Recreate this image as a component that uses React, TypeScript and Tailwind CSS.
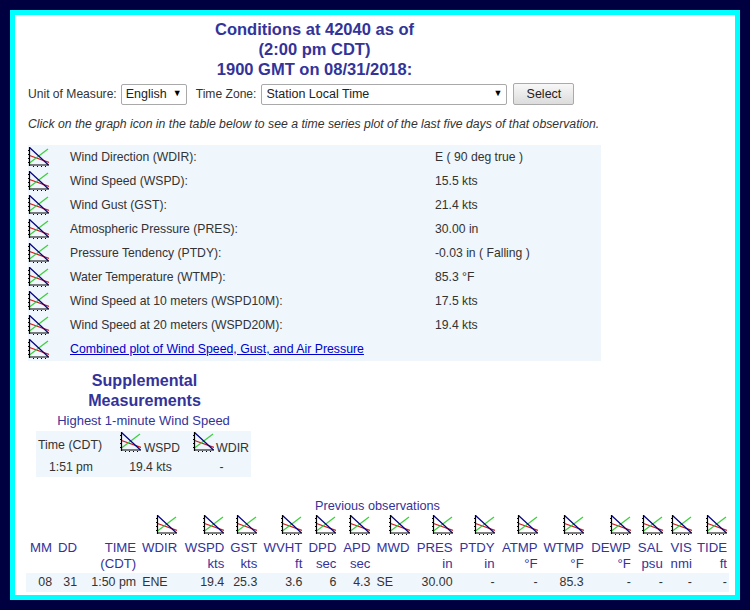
const fields = [
  ['Wind Direction (WDIR):', 'E ( 90 deg true )'],
  ['Wind Speed (WSPD):', '15.5 kts'],
  ['Wind Gust (GST):', '21.4 kts'],
  ['Atmospheric Pressure (PRES):', '30.00 in'],
  ['Pressure Tendency (PTDY):', '-0.03 in ( Falling )'],
  ['Water Temperature (WTMP):', '85.3 °F'],
  ['Wind Speed at 10 meters (WSPD10M):', '17.5 kts'],
  ['Wind Speed at 20 meters (WSPD20M):', '19.4 kts'],
];

const columns = [
  {name: 'MM', unit: '', value: '08', width: 'w-[28px]'},
  {name: 'DD', unit: '', value: '31', width: 'w-[25px]'},
  {name: 'TIME', unit: '(CDT)', value: '1:50 pm', width: 'w-[59px]'},
  {name: 'WDIR', unit: '', value: 'ENE', width: 'w-[41px]', icon: true, left: true},
  {name: 'WSPD', unit: 'kts', value: '19.4', width: 'w-[47px]', icon: true},
  {name: 'GST', unit: 'kts', value: '25.3', width: 'w-[33px]', icon: true},
  {name: 'WVHT', unit: 'ft', value: '3.6', width: 'w-[45px]', icon: true},
  {name: 'DPD', unit: 'sec', value: '6', width: 'w-[34px]', icon: true},
  {name: 'APD', unit: 'sec', value: '4.3', width: 'w-[34px]', icon: true},
  {name: 'MWD', unit: '', value: 'SE', width: 'w-[39px]', icon: true, left: true},
  {name: 'PRES', unit: 'in', value: '30.00', width: 'w-[43px]', icon: true},
  {name: 'PTDY', unit: 'in', value: '-', width: 'w-[42px]', icon: true},
  {name: 'ATMP', unit: '°F', value: '-', width: 'w-[43px]', icon: true},
  {name: 'WTMP', unit: '°F', value: '85.3', width: 'w-[46px]', icon: true},
  {name: 'DEWP', unit: '°F', value: '-', width: 'w-[47px]', icon: true},
  {name: 'SAL', unit: 'psu', value: '-', width: 'w-[32px]', icon: true},
  {name: 'VIS', unit: 'nmi', value: '-', width: 'w-[29px]', icon: true},
  {name: 'TIDE', unit: 'ft', value: '-', width: 'w-[35px]', icon: true},
];

function GraphIcon() {
  const ticks = [3, 7, 11, 15];
  return (
    <svg width="21" height="20" viewBox="0 0 21 20" className="inline-block align-top">
      <line x1="1.5" y1="8.5" x2="21" y2="15.5" stroke="#c81e1e" strokeWidth="1.3" />
      <line x1="1.5" y1="16" x2="20" y2="2" stroke="#3ccf3c" strokeWidth="1.2" />
      <line x1="1.5" y1="0.5" x2="20.5" y2="18" stroke="#000080" strokeWidth="1.2" />
      <path d="M1.5 0V19M1 18H21" stroke="#000" strokeWidth="1.2" fill="none" />
      {ticks.map(t => (
        <rect key={t} x="0" y={t} width="1" height="1" fill="#000" />
      ))}
      {ticks.map(t => (
        <rect key={t} x={t + 2} y="19" width="1" height="1" fill="#000" />
      ))}
    </svg>
  );
}

function SelectBox({value, className}: {value: string; className: string}) {
  return (
    <div className={`relative h-[21px] ${className}`}>
      <select
        defaultValue={value}
        className="h-full w-full appearance-none rounded-[2px] border border-[#a9a9a9] bg-white pl-[4px] text-[12.5px] text-[#222]"
      >
        <option>{value}</option>
      </select>
      <span className="pointer-events-none absolute top-[3px] right-[5px] text-[9px] text-black">▼</span>
    </div>
  );
}

export default function App() {
  return (
    <div className="box-border h-[610px] w-[750px] overflow-hidden bg-[#000040] p-[10px] font-['Liberation_Sans',Arial,sans-serif] text-[12.2px] text-[#333]">
      <div className="box-border h-full border-[5px] border-[#00ffff] bg-white pt-[4px] pl-[13px]">
        <h1 className="w-[573px] text-center text-[16.5px] leading-[20px] font-bold text-[#333399]">
          Conditions at 42040 as of
          <br />
          (2:00 pm CDT)
          <br />
          1900 GMT on 08/31/2018:
        </h1>

        <form className="mt-[4px] flex h-[22px] items-center">
          <span className="text-[12.1px]">Unit of Measure:</span>
          <SelectBox value="English" className="ml-[4px] w-[66px]" />
          <span className="ml-[9px] text-[12.1px]">Time Zone:</span>
          <SelectBox value="Station Local Time" className="ml-[5px] w-[246px]" />
          <button
            type="button"
            className="ml-[6px] h-[22px] w-[61px] rounded-[2px] border border-[#aaa] bg-gradient-to-b from-[#f8f8f8] to-[#dcdcdc] text-[12.5px] text-[#222]"
          >
            Select
          </button>
        </form>

        <p className="mt-[12px] h-[14px] text-[12.24px] leading-[14px] whitespace-nowrap italic">
          Click on the graph icon in the table below to see a time series plot of the last five days of that
          observation.
        </p>

        <table className="mt-[14px] w-[573px] table-fixed bg-[#eff6fc]">
          <tbody>
            {fields.map(([label, value]) => (
              <tr key={label} className="h-[24px]">
                <td className="w-[42px] align-top pt-[2px]">
                  <GraphIcon />
                </td>
                <td className="w-[365px]">{label}</td>
                <td>{value}</td>
              </tr>
            ))}
            <tr className="h-[24px]">
              <td className="align-top pt-[2px]">
                <GraphIcon />
              </td>
              <td colSpan={2}>
                <a href="#" className="text-[12.3px] text-[#0000cc] underline">
                  Combined plot of Wind Speed, Gust, and Air Pressure
                </a>
              </td>
            </tr>
          </tbody>
        </table>

        <div className="mt-[9px] ml-[8px] w-[215px] text-center">
          <h2 className="pl-[2px] text-[16.1px] leading-[20px] font-bold text-[#333399]">
            Supplemental
            <br />
            Measurements
          </h2>
          <div className="mt-[4px] h-[14px] text-[13px] leading-[14px] whitespace-nowrap text-[#333399]">
            Highest 1-minute Wind Speed
          </div>
          <table className="mt-[3px] w-[215px] table-fixed bg-[#eff6fc]">
            <tbody>
              <tr className="h-[26px]">
                <td className="w-[84px] pt-[2px] pr-[16px] text-[12.4px] whitespace-nowrap">Time (CDT)</td>
                <td className="w-[73px] text-left align-top pt-[1px]">
                  <GraphIcon />
                  <span className="ml-[3px] inline-block pt-[7px] text-[12px]">WSPD</span>
                </td>
                <td className="text-left align-top pt-[1px] whitespace-nowrap">
                  <GraphIcon />
                  <span className="ml-[2px] inline-block pt-[7px] text-[12.4px]">WDIR</span>
                </td>
              </tr>
              <tr className="h-[19px]">
                <td className="pr-[14px]">1:51 pm</td>
                <td className="pr-[12px]">19.4 kts</td>
                <td className="pr-[1px]">-</td>
              </tr>
            </tbody>
          </table>
        </div>

        <div className="mt-[22px] ml-[-2px] w-[703px]">
          <div className="h-[14px] text-center text-[12.7px] leading-[14px] text-[#333399]">Previous observations</div>
          <table className="mt-[2px] w-[703px] table-fixed border-collapse">
            <colgroup>
              {columns.map(c => (
                <col key={c.name} className={c.width} />
              ))}
            </colgroup>
            <thead>
              <tr className="h-[24px]">
                {columns.map(c => (
                  <th key={c.name} className="pr-[2px] text-right align-top font-normal">
                    {c.icon && <GraphIcon />}
                  </th>
                ))}
              </tr>
              <tr className="h-[17px] text-[13.2px] leading-[17px] text-[#333399]">
                {columns.map(c => (
                  <th key={c.name} className="pr-[2px] text-right font-normal whitespace-nowrap">
                    {c.name}
                  </th>
                ))}
              </tr>
              <tr className="h-[17px] text-[13.2px] leading-[16px] text-[#333399]">
                {columns.map(c => (
                  <th key={c.name} className="pr-[2px] text-right align-top font-normal whitespace-nowrap">
                    {c.unit}
                  </th>
                ))}
              </tr>
            </thead>
            <tbody>
              <tr className="h-[19px] bg-[#eff6fc] text-[12.4px]">
                {columns.map(c => (
                  <td key={c.name} className={c.left ? 'pl-[4px] text-left whitespace-nowrap' : 'pr-[2px] text-right whitespace-nowrap'}>
                    {c.value}
                  </td>
                ))}
              </tr>
            </tbody>
          </table>
        </div>
      </div>
    </div>
  );
}
